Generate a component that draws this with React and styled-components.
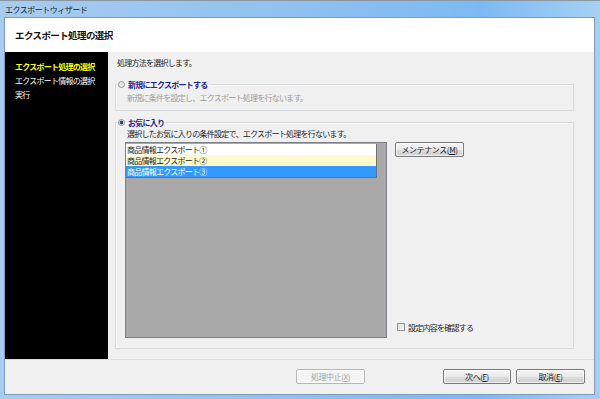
import {createGlobalStyle, styled} from 'styled-components'

const GlobalStyle = createGlobalStyle`
  html, body {
    margin: 0;
    padding: 0;
  }
  body {
    width: 600px;
    height: 399px;
    overflow: hidden;
    font-family: "Noto Sans CJK JP", "Liberation Sans", sans-serif;
    font-size: 8px;
    letter-spacing: -0.75px;
    color: #1a1a1a;
  }
`

const Window = styled.div`
  width: 600px;
  height: 399px;
  box-sizing: border-box;
  display: flex;
  flex-direction: column;
  padding: 0 6px 5px 5px;
  border-top: 1px solid #8a96a2;
  background: linear-gradient(to right, #a7ccee, #92c2ef 45%, #7cb9f3 80%, #a6d0f3);
`

const TitleBar = styled.div`
  height: 17px;
  display: flex;
  align-items: center;
  font-size: 8px;
  letter-spacing: -0.5px;
  color: #202020;
`

const Client = styled.div`
  flex: 1;
  display: flex;
  flex-direction: column;
  background: #f0f0f0;
  box-shadow: 0 0 0 1px #7d9bb8;
`

const Header = styled.div`
  height: 34px;
  display: flex;
  align-items: center;
  padding-left: 10px;
  background: #fff;
  font-size: 9.5px;
  letter-spacing: -0.6px;
  font-weight: bold;
  color: #111;
`

const Body = styled.div`
  flex: 1;
  display: flex;
`

const Sidebar = styled.ul`
  width: 103px;
  margin: 0;
  padding: 8px 0 0 10px;
  box-sizing: border-box;
  list-style: none;
  background: #000;
`

const Step = styled.li`
  line-height: 14px;
  color: ${p => (p.$active ? '#ffff00' : '#ffffff')};
  font-weight: ${p => (p.$active ? 'bold' : 'normal')};
`

const Main = styled.div`
  flex: 1;
  padding: 5px 20px 0 7px;
`

const Intro = styled.div`
  line-height: 12px;
  margin-left: 2px;
  margin-bottom: 9px;
`

const Group = styled.fieldset`
  margin: ${p => p.$top || 0}px 0 0;
  padding: 0 0 ${p => p.$bottom || 0}px 1px;
  border: 1px solid #d6dadd;
  box-shadow: inset 1px 1px 0 #fbfbfb;
  min-width: 0;
`

const Legend = styled.legend`
  padding: 0 2px 0 1px;
  display: flex;
  align-items: center;
  gap: 3px;
  height: 12px;
  color: #1c2496;
  font-weight: bold;
`

const Radio = styled.span`
  width: 7px;
  height: 7px;
  box-sizing: border-box;
  border-radius: 50%;
  border: 1px solid #8f9397;
  background: radial-gradient(circle, ${p => (p.$checked ? '#2d4f80 0, #2d4f80 1.6px, #e6e6e6 2.2px' : '#dcdcdc 0, #f4f4f4 3px')});
`

const Content = styled.div`
  padding: ${p => p.$pad || '0'} 0 0 8px;
`

const Desc = styled.div`
  line-height: 12px;
  margin-left: 2px;
  color: ${p => (p.$disabled ? '#9b9b9b' : '#1a1a1a')};
`

const Row = styled.div`
  display: flex;
  gap: 8px;
  margin-top: 2px;
`

const ListBox = styled.div`
  width: 262px;
  height: 196px;
  box-sizing: border-box;
  padding: 1px 9px 0 0;
  border: 1px solid #7b7f84;
  background: #a9a9a9;
`

const Items = styled.div`
  border-right: 1px solid #6e6e6e;
  border-bottom: 1px solid #6e6e6e;
`

const Item = styled.div`
  height: 11px;
  line-height: 11px;
  padding-left: 1px;
  background: ${p => p.$bg};
  color: ${p => p.$color || '#1a1a1a'};
`

const Side = styled.div`
  flex: 1;
  display: flex;
  flex-direction: column;
  justify-content: space-between;
  padding-bottom: 5px;
`

const Button = styled.button`
  width: ${p => p.$w || 69}px;
  height: 15px;
  padding: 0;
  font: inherit;
  letter-spacing: -0.4px;
  color: ${p => (p.disabled ? '#a2a2a2' : '#1a1a1a')};
  border: 1px solid ${p => (p.disabled ? '#b3b7ba' : '#7a7a7a')};
  border-radius: 2px;
  background: ${p => (p.disabled ? '#f4f4f4' : 'linear-gradient(#f6f6f6, #e9e9e9 50%, #dcdcdc 51%, #d2d2d2)')};
  box-shadow: inset 0 0 0 1px rgba(255, 255, 255, 0.6);
  margin-right: ${p => p.$gap || 0}px;
`

const Key = styled.u`
  text-decoration: underline;
`

const CheckRow = styled.label`
  display: flex;
  align-items: center;
  gap: 3px;
  height: 12px;
  margin-left: 2px;
`

const Check = styled.span`
  width: 8px;
  height: 8px;
  box-sizing: border-box;
  border: 1px solid #8f9397;
  background: linear-gradient(135deg, #dedede, #f7f7f7);
`

const Footer = styled.div`
  height: 35px;
  box-sizing: border-box;
  display: flex;
  justify-content: flex-end;
  align-items: flex-start;
  padding: 9px 9px 0 0;
  border-top: 1px solid #dedede;
`

const App = () => {
  return (
    <>
      <GlobalStyle />
      <Window>
        <TitleBar>エクスポートウィザード</TitleBar>
        <Client>
          <Header>エクスポート処理の選択</Header>
          <Body>
            <Sidebar>
              <Step $active>エクスポート処理の選択</Step>
              <Step>エクスポート情報の選択</Step>
              <Step>実行</Step>
            </Sidebar>
            <Main>
              <Intro>処理方法を選択します。</Intro>

              <Group $bottom={6}>
                <Legend>
                  <Radio />
                  新規にエクスポートする
                </Legend>
                <Content $pad="2px">
                  <Desc $disabled>新規に条件を設定し、エクスポート処理を行ないます。</Desc>
                </Content>
              </Group>

              <Group $top={5} $bottom={10}>
                <Legend>
                  <Radio $checked />
                  お気に入り
                </Legend>
                <Content>
                  <Desc>選択したお気に入りの条件設定で、エクスポート処理を行ないます。</Desc>
                  <Row>
                    <ListBox>
                      <Items>
                        <Item $bg="#ffffff">商品情報エクスポート①</Item>
                        <Item $bg="#fff9cc">商品情報エクスポート②</Item>
                        <Item $bg="#3399ff" $color="#ffffff">商品情報エクスポート③</Item>
                      </Items>
                    </ListBox>
                    <Side>
                      <Button $w={69}>メンテナンス(<Key>M</Key>)</Button>
                      <CheckRow>
                        <Check />
                        設定内容を確認する
                      </CheckRow>
                    </Side>
                  </Row>
                </Content>
              </Group>
            </Main>
          </Body>
          <Footer>
            <Button disabled $gap={78}>処理中止(<Key>X</Key>)</Button>
            <Button $w={68} $gap={5}>次へ(<Key>F</Key>)</Button>
            <Button>取消(<Key>E</Key>)</Button>
          </Footer>
        </Client>
      </Window>
    </>
  )
}

export default App
